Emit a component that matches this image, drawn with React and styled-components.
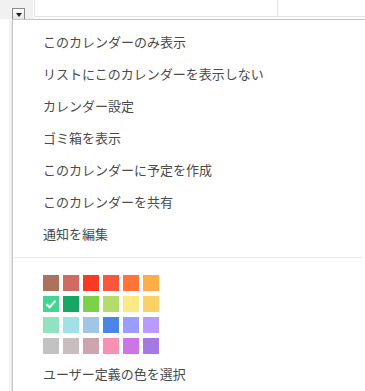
import React from "react";
import styled, { createGlobalStyle } from "styled-components";

const GlobalStyle = createGlobalStyle`
    html, body {
        margin: 0;
        padding: 0;
        background: #fff;
        overflow: hidden;
    }
    body {
        font-family: "Noto Sans CJK JP", "Noto Sans", sans-serif;
    }
`;

const Page = styled.div`
    width: 365px;
    height: 391px;
    overflow: hidden;
`;

const TopBar = styled.div`
    display: flex;
    height: 19px;
`;

const GreyCell = styled.div`
    width: 33px;
    background: #f1f1f1;
    padding: 8px 0 0 12px;
    box-sizing: border-box;
`;

const DropButton = styled.div`
    width: 13px;
    height: 11px;
    box-sizing: border-box;
    border: 1px solid #8a8a8a;
    border-bottom: none;
    background: linear-gradient(#fdfdfd, #e6e6e6);
    display: flex;
    align-items: center;
    justify-content: center;

    &::after {
        content: "";
        border-left: 3px solid transparent;
        border-right: 3px solid transparent;
        border-top: 4px solid #222;
        margin-top: 1px;
    }
`;

const GridCell = styled.div`
    width: ${p => p.$width || "auto"};
    flex: ${p => (p.$width ? "none" : 1)};
    height: 17px;
    box-sizing: border-box;
    border-left: 1px solid #e3e3e3;
    border-bottom: 1px solid #e3e3e3;
    margin-left: ${p => p.$gap || 0}px;
`;

const Menu = styled.div`
    margin-left: 12px;
    height: 400px;
    background: #fff;
    border-left: 1px solid #c6c6c6;
    border-top: 1px solid #c6c6c6;
    box-shadow: -1px 1px 3px rgba(0, 0, 0, 0.15);
    padding-top: 6px;
    box-sizing: border-box;
`;

const Item = styled.div`
    height: 32px;
    line-height: 32px;
    padding-left: 30px;
    font-size: 13px;
    color: #4a4a4a;
    white-space: nowrap;
`;

const Separator = styled.div`
    height: 1px;
    background: #ebebeb;
    margin: 7px 2px 17px 0;
`;

const Palette = styled.div`
    display: grid;
    grid-template-columns: repeat(6, 16px);
    grid-auto-rows: 16px;
    column-gap: 4px;
    row-gap: 5px;
    padding-left: 30px;
    margin-bottom: 4px;
`;

const Swatch = styled.div`
    background: ${p => p.$color};
    display: flex;
    align-items: center;
    justify-content: center;
`;

const colors = [
    "#ac725e", "#d06b64", "#f83a22", "#fa573c", "#ff7537", "#ffad46",
    "#42d692", "#16a765", "#7bd148", "#b3dc6c", "#fbe983", "#fad165",
    "#92e1c0", "#9fe1e7", "#9fc6e7", "#4986e7", "#9a9cff", "#b99aff",
    "#c2c2c2", "#cabdbf", "#cca6ac", "#f691b2", "#cd74e6", "#a47ae2",
];

const items = [
    "このカレンダーのみ表示",
    "リストにこのカレンダーを表示しない",
    "カレンダー設定",
    "ゴミ箱を表示",
    "このカレンダーに予定を作成",
    "このカレンダーを共有",
    "通知を編集",
];

const Check = () => (
    <svg width="12" height="10" viewBox="0 0 12 10">
        <path d="M1.5 5.2 L4.6 8.2 L10.5 1.8" fill="none" stroke="#fff" strokeWidth="2" />
    </svg>
);

const App = () => (
    <Page>
        <GlobalStyle />
        <TopBar>
            <GreyCell>
                <DropButton />
            </GreyCell>
            <GridCell $width="243px" $gap={1} />
            <GridCell />
        </TopBar>
        <Menu>
            {items.map(text => (
                <Item key={text}>{text}</Item>
            ))}
            <Separator />
            <Palette>
                {colors.map((c, i) => (
                    <Swatch key={c} $color={c}>
                        {i === 6 && <Check />}
                    </Swatch>
                ))}
            </Palette>
            <Item>ユーザー定義の色を選択</Item>
        </Menu>
    </Page>
);

export default App;
